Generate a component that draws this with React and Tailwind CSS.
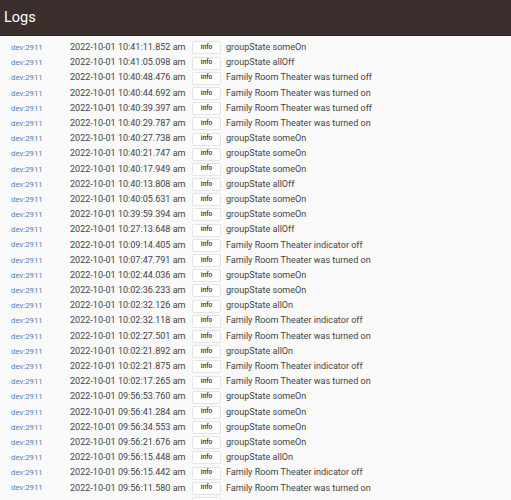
const rows = [
    ['10:41:11.852', 'groupState someOn'],
    ['10:41:05.098', 'groupState allOff'],
    ['10:40:48.476', 'Family Room Theater was turned off'],
    ['10:40:44.692', 'Family Room Theater was turned on'],
    ['10:40:39.397', 'Family Room Theater was turned off'],
    ['10:40:29.787', 'Family Room Theater was turned on'],
    ['10:40:27.738', 'groupState someOn'],
    ['10:40:21.747', 'groupState someOn'],
    ['10:40:17.949', 'groupState someOn'],
    ['10:40:13.808', 'groupState allOff'],
    ['10:40:05.631', 'groupState someOn'],
    ['10:39:59.394', 'groupState someOn'],
    ['10:27:13.648', 'groupState allOff'],
    ['10:09:14.405', 'Family Room Theater indicator off'],
    ['10:07:47.791', 'Family Room Theater was turned on'],
    ['10:02:44.036', 'groupState someOn'],
    ['10:02:36.233', 'groupState someOn'],
    ['10:02:32.126', 'groupState allOn'],
    ['10:02:32.118', 'Family Room Theater indicator off'],
    ['10:02:27.501', 'Family Room Theater was turned on'],
    ['10:02:21.892', 'groupState allOn'],
    ['10:02:21.875', 'Family Room Theater indicator off'],
    ['10:02:17.265', 'Family Room Theater was turned on'],
    ['09:56:53.760', 'groupState someOn'],
    ['09:56:41.284', 'groupState someOn'],
    ['09:56:34.553', 'groupState someOn'],
    ['09:56:21.676', 'groupState someOn'],
    ['09:56:15.448', 'groupState allOn'],
    ['09:56:15.442', 'Family Room Theater indicator off'],
    ['09:56:11.580', 'Family Room Theater was turned on'],
]

function LogRow({ time, message }) {
    return (
        <div className="flex h-[15.2px] shrink-0 items-center whitespace-nowrap">
            <span className="w-[59px] shrink-0 text-[7.8px] text-[#4f7fae]">{time && 'dev:2911'}</span>
            <span className="w-[122px] shrink-0 text-[9.05px] text-[#444444]">{time && `2022-10-01 ${time} am`}</span>
            <span className="flex h-[13px] w-[29px] shrink-0 items-center justify-center rounded-[2px] border border-[#e4e4e4] bg-white text-[6.6px] font-medium text-[#333333]">{time && 'info'}</span>
            <span className="ml-[5px] text-[9.05px] text-[#444444]">{message}</span>
        </div>
    )
}

export default function App() {
    return (
        <div className="flex h-[500px] w-[511px] flex-col overflow-hidden bg-[#fafafa] font-['Roboto',sans-serif]">
            <header className="flex h-[36px] shrink-0 items-center border-b border-[#2a2422] bg-[#3a2f2c] pl-[4px]">
                <h1 className="text-[14.5px] font-normal text-white">Logs</h1>
            </header>
            <div className="flex flex-col pt-[4.3px] pl-[11px]">
                {rows.map(([time, message]) => (
                    <LogRow key={time} time={time} message={message} />
                ))}
                <LogRow time="" message="" />
            </div>
        </div>
    )
}
